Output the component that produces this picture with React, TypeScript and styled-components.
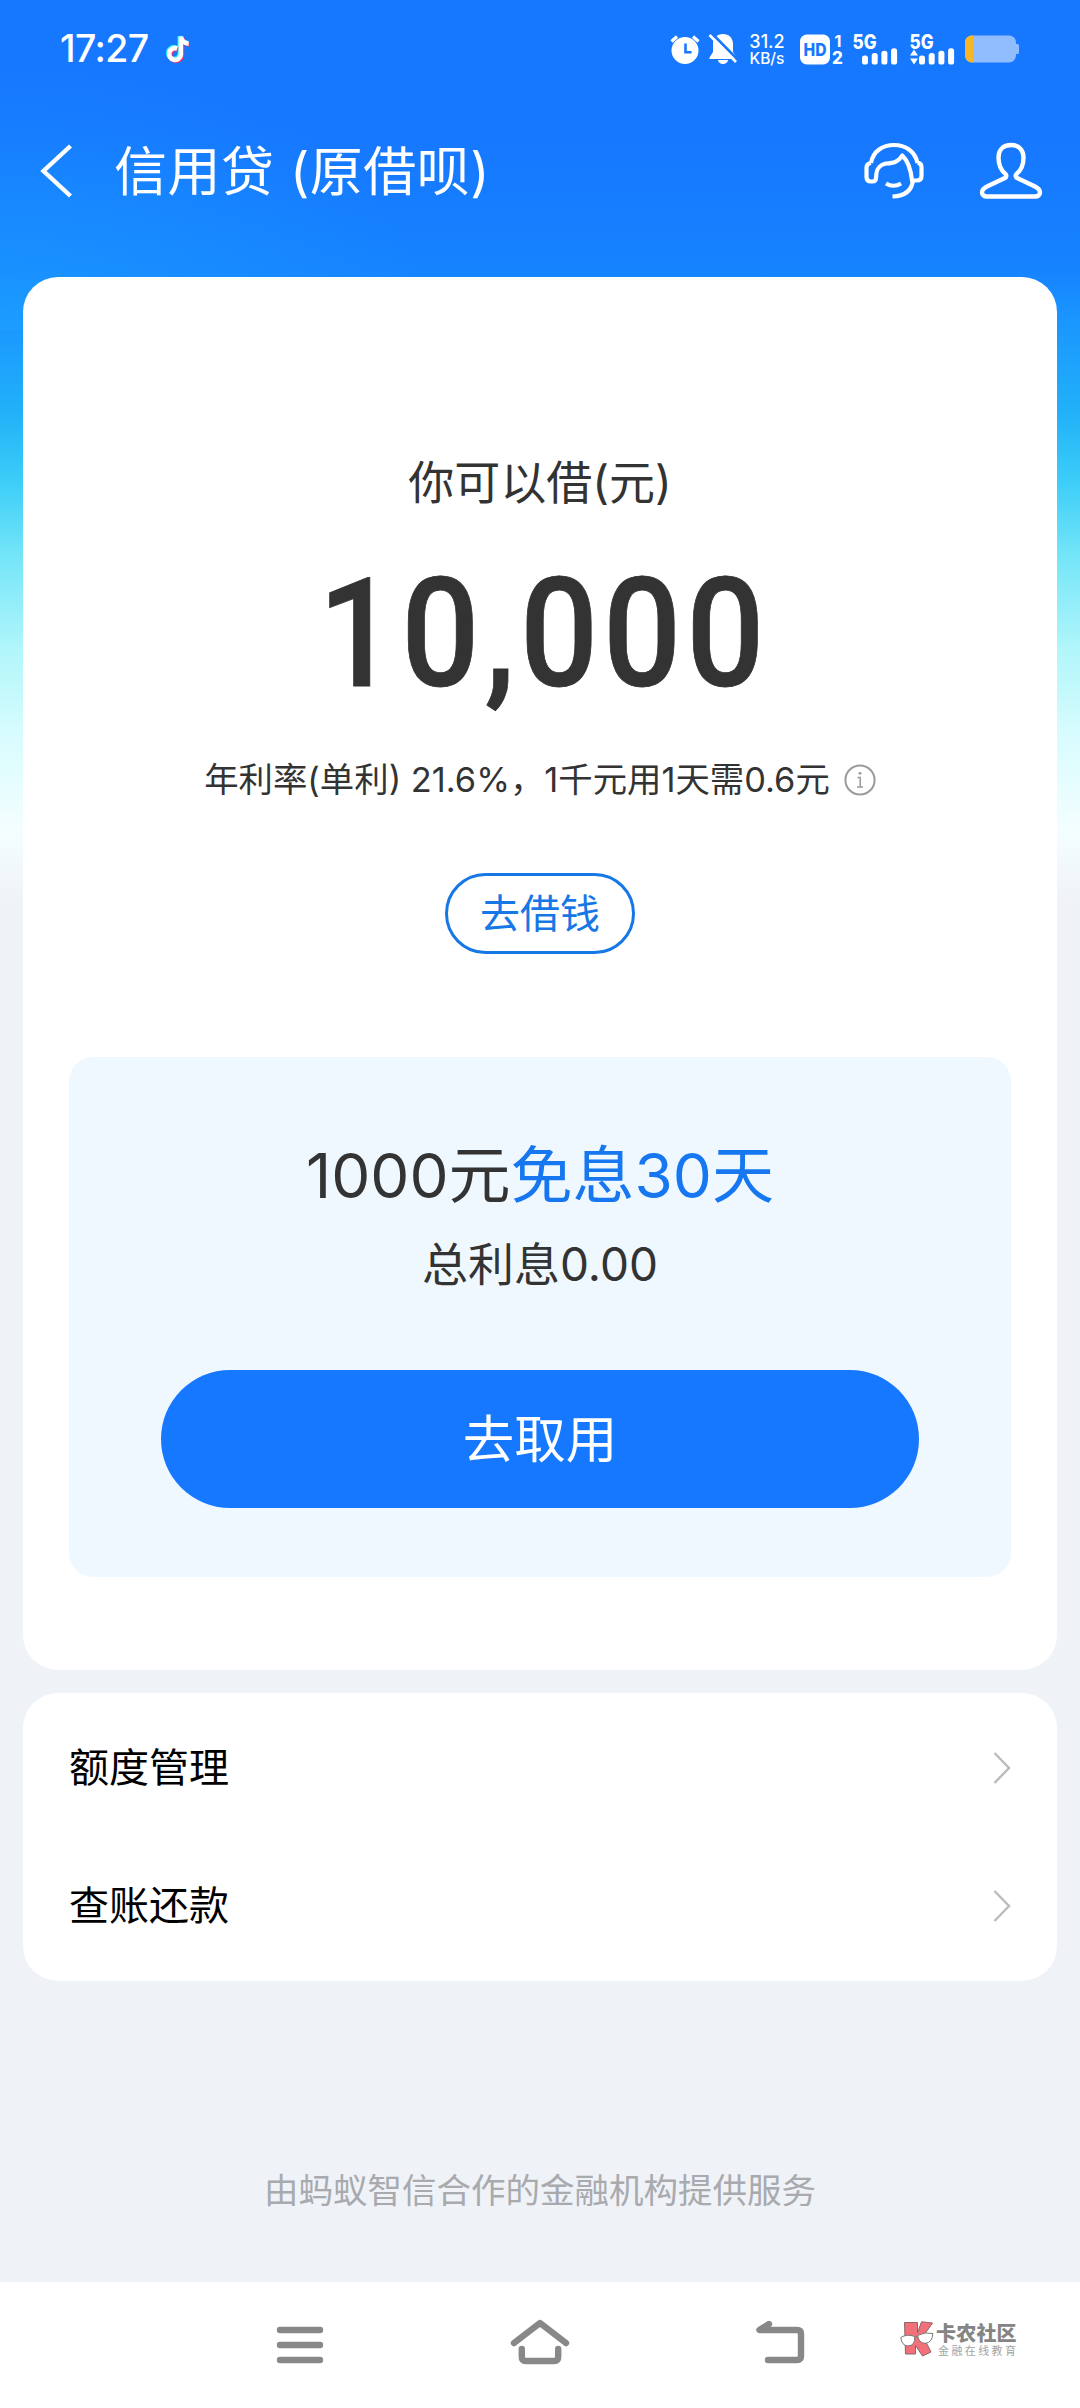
import React from 'react';
import styled, { createGlobalStyle } from 'styled-components';

const sans = `Inter, 'Noto Sans CJK SC', sans-serif`;

const GlobalStyle = createGlobalStyle`
  *, *::before, *::after { box-sizing: border-box; }
  body { margin: 0; background: #eff2f7; font-family: ${sans}; }
  button { font-family: inherit; padding: 0; border: 0; background: none; color: inherit; }
  h1, p { margin: 0; font-weight: 400; }
  svg { display: block; flex: none; overflow: visible; }
`;

const Page = styled.div`
  display: flex;
  flex-direction: column;
  width: 1080px;
  height: 2408px;
  background:
    radial-gradient(ellipse 420px 240px at 0 300px, rgba(28, 160, 255, 0.55), rgba(28, 160, 255, 0) 100%) no-repeat 0 0 / 1080px 330px,
    linear-gradient(180deg,
      #1677ff 0, #1677ff 130px, #1683ff 270px, #1a96ff 320px, #22b2f8 415px, #3ccdf8 480px,
      #74e5f8 556px, #b0f6fa 648px, #d8fcfe 735px, #f4feff 832px, #eff2f7 905px, #eff2f7 100%);
`;

const StatusBar = styled.div`
  display: flex;
  align-items: center;
  height: 98px;
  padding: 0 60px;
  color: #fff;
`;

const Clock = styled.span`
  width: 106px;
  font-size: 37.5px;
  line-height: 40px;
  font-weight: 500;
  letter-spacing: -0.6px;
`;

const StatusIcons = styled.div`
  display: flex;
  align-items: center;
  margin-left: auto;
`;

const NetSpeed = styled.div`
  display: flex;
  flex-direction: column;
  align-items: center;
  width: 38px;
  margin: 0 14px 0 10px;
  padding-top: 2px;
  font-size: 18px;
  line-height: 17px;
  white-space: nowrap;
  font-weight: 500;
`;

const NetUnit = styled.span`
  font-size: 15.5px;
`;

const TitleBar = styled.header`
  display: flex;
  align-items: center;
  height: 146px;
  margin-bottom: 33px;
  padding: 0 38px 0 40px;
  color: #fff;
`;

const Title = styled.h1`
  margin: 2px auto 0 41px;
  font-size: 53px;
  line-height: 70px;
  letter-spacing: 0.5px;
  white-space: nowrap;
`;

const HeaderAction = styled.button`
  display: flex;
  margin-left: 56px;
`;

const LoanCard = styled.section`
  display: flex;
  flex-direction: column;
  align-items: center;
  height: 1393px;
  margin: 0 23px;
  padding: 175px 46px 0;
  border-radius: 35px;
  background: #fff;
  color: #333;
`;

const Label = styled.p`
  font-size: 46px;
  line-height: 60px;
`;

const Amount = styled.p`
  margin-top: 42px;
  padding-left: 9px;
  font-family: Roboto, sans-serif;
  font-size: 152px;
  line-height: 160px;
  font-weight: 500;
  letter-spacing: 5.4px;
  transform: scaleX(0.905);
  -webkit-text-stroke: 0.8px #333;
`;

const RateRow = styled.div`
  display: flex;
  align-items: center;
  gap: 14px;
  margin-top: 42px;
  font-size: 34.4px;
  line-height: 48px;
  white-space: nowrap;
`;

const BorrowButton = styled.button`
  width: 190px;
  height: 81px;
  margin-top: 69px;
  border: 3px solid #1677e6;
  border-radius: 41px;
  color: #1677e6;
  font-size: 40px;
  line-height: 76px;
`;

const Offer = styled.div`
  display: flex;
  flex-direction: column;
  align-items: center;
  width: 942px;
  height: 520px;
  margin-top: 103px;
  padding-top: 79px;
  border-radius: 24px;
  background: #f0f8ff;
`;

const OfferTitle = styled.p`
  font-size: 62px;
  line-height: 80px;
  white-space: nowrap;
`;

const Highlight = styled.span`
  color: #1677f0;
`;

const OfferNote = styled.p`
  margin-top: 18px;
  font-size: 46px;
  line-height: 60px;
`;

const PrimaryButton = styled.button`
  width: 758px;
  height: 138px;
  margin-top: 76px;
  border-radius: 69px;
  background: #1677ff;
  color: #fff;
  font-size: 51.5px;
  line-height: 138px;
`;

const Menu = styled.nav`
  margin: 23px 23px 0;
  padding: 6px 46px;
  border-radius: 35px;
  background: #fff;
`;

const MenuRow = styled.a`
  display: flex;
  align-items: center;
  justify-content: space-between;
  height: 138px;
  color: #000;
  font-size: 40px;
  line-height: 54px;
`;

const Provider = styled.p`
  margin-top: 185px;
  text-align: center;
  font-size: 34.5px;
  line-height: 50px;
  color: #a8aaae;
`;

const NavBar = styled.footer`
  display: flex;
  align-items: center;
  height: 126px;
  margin-top: auto;
  padding-left: 180px;
  background: #fff;
`;

const NavItem = styled.button<{ $lift?: number }>`
  display: flex;
  align-items: center;
  justify-content: center;
  width: 240px;
  height: 126px;
  padding-bottom: ${(p) => (p.$lift ?? 0) * 2}px;
`;

const Brand = styled.div`
  display: flex;
  align-items: center;
  gap: 2px;
  padding: 0 0 12px;
  color: #858585;
`;

const BrandText = styled.div`
  display: flex;
  flex-direction: column;
  padding-top: 2px;
`;

const BrandName = styled.span`
  font-size: 20px;
  line-height: 20px;
  font-weight: 900;
  letter-spacing: 0.2px;
  white-space: nowrap;
`;

const BrandTag = styled.span`
  margin-top: 1px;
  padding-left: 2px;
  font-size: 11px;
  line-height: 12px;
  letter-spacing: 2.4px;
  color: #a3a3a3;
  white-space: nowrap;
`;

const Spacer = styled.span<{ $w: number }>`
  flex: none;
  width: ${(p) => p.$w}px;
`;

const TikTok = () => (
  <svg width="25" height="28" viewBox="0 0 25 28" fill="none" strokeWidth="4.6">
    <path stroke="#25f4ee" d="M10.2 12.5A5.9 5.9 0 1 0 13.9 19V1c.6 4 3.6 6.5 7.5 7" />
    <path stroke="#fe2c55" d="M12.2 14.3A5.9 5.9 0 1 0 15.9 20.5V2.5c.6 4 3.6 6.5 7.8 7" />
    <path stroke="#fff" d="M11.2 13.5A5.9 5.9 0 1 0 14.9 19.700V1.700c.6 4 3.600 6.500 7.800 7" />
  </svg>
);

const Alarm = () => (
  <svg width="30" height="30" viewBox="0 0 30 30">
    <circle cx="15" cy="16.5" r="13.5" fill="#fff" />
    <path d="M1.5 7.5 7 2.5M28.5 7.5 23 2.5" stroke="#fff" strokeWidth="3.2" />
    <path d="M15.5 9.5v8.7h6" stroke="#1677ff" strokeWidth="2.6" fill="none" />
  </svg>
);

const BellOff = () => (
  <svg width="30" height="32" viewBox="0 0 30 32">
    <path d="M15 1C9 1 5 5 5 11v8l-3.5 5.5V26h27v-1.5L25 19v-8C25 5 21 1 15 1zM10 27h10a5 4 0 0 1-10 0z" fill="#fff" />
    <path d="M3.5 0 31 28" stroke="#1677ff" strokeWidth="2.6" />
    <path d="M1.5 2 28 29" stroke="#fff" strokeWidth="2.6" />
  </svg>
);

const HdBadge = () => (
  <svg width="44" height="47" viewBox="0 -8 44 47" fontFamily="Inter, sans-serif">
    <rect x="0" y="0.5" width="30" height="30" rx="7" fill="#fff" />
    <text x="15" y="22" textAnchor="middle" fontSize="17.5" fontWeight="800" textLength="23" lengthAdjust="spacingAndGlyphs" fill="#1677ff">HD</text>
    <text x="38" y="12.5" textAnchor="middle" fontSize="16" fontWeight="700" fill="#fff">1</text>
    <text x="37.5" y="30" textAnchor="middle" fontSize="17" fontWeight="800" fill="#fff">2</text>
  </svg>
);

const Signal = ({ data }: { data?: boolean }) => (
  <svg width="46" height="47" viewBox="-1 -8 46 47" fill="#fff" fontFamily="Inter, sans-serif">
    <text x="-0.5" y="15" fontSize="19.5" fontWeight="800" textLength="24" lengthAdjust="spacingAndGlyphs">5G</text>
    {[0, 1, 2, 3].map((i) => (
      <rect key={i} x={9 + i * 9.7} y={21.5 - i * 2.4} width="6" height={9 + i * 2.4} rx="2.6" />
    ))}
    {data && <path d="M0 21.5 4 15.5 8 21.5zM0 24.5h8L4 30.5z" />}
  </svg>
);

const Battery = () => (
  <svg width="55" height="28" viewBox="0 0 55 28">
    <defs>
      <clipPath id="cell"><rect x="0" y="0.5" width="51" height="27" rx="7" /></clipPath>
    </defs>
    <g clipPath="url(#cell)">
      <rect width="51" height="28" fill="#91bdff" />
      <rect width="8" height="28" fill="#f7b626" />
    </g>
    <path d="M51 9h1.5a1.5 1.5 0 0 1 1.5 1.5v7a1.5 1.5 0 0 1-1.5 1.5H51z" fill="#91bdff" />
  </svg>
);

const Back = () => (
  <svg width="33" height="54" viewBox="0 0 33 54" fill="none" stroke="#fff" strokeWidth="4.4">
    <path d="M30.5 2 3.5 27l27 25" />
  </svg>
);

const Support = () => (
  <svg width="60" height="58" viewBox="0 0 60 58" fill="none" stroke="#fff" strokeWidth="4.2" strokeLinejoin="round">
    <path d="M7 21C9 9 19 3 30 3s21 6 23.5 18" />
    <path d="M7 21C4 21.5 2.5 23 2.5 25.5V35c0 3 1.8 4.5 4.5 4.5h1.5c2.5 0 3.6-1.5 3.6-4C12.1 27 15 23 22 21.5c7-.5 12-1 16.3-8C43 18 46.5 24 48 38.5h5c2.7 0 4.5-1.5 4.5-4.5v-9c0-2.5-1.5-4-4-4.2" />
    <path d="M22 41.5c4.5 2.7 10.5 2.7 15 0M49 38c-1 10-8 16-20.5 16.5" />
  </svg>
);

const User = () => (
  <svg width="62" height="58" viewBox="0 0 62 58" fill="none" stroke="#fff" strokeWidth="4.4" strokeLinejoin="round">
    <path d="M31 3c-8 0-12.5 5-12.5 12.5 0 7.5 2 12.5 7 16.5 1.3 1.3 1 3.2-.6 4L7 44.5c-3.5 1.7-5 3.5-5 6S4 54.5 7 54.5h48c3 0 5-1.5 5-4s-1.5-4.3-5-6L37.1 36c-1.6-.8-1.9-2.7-.6-4 5-4 7-9 7-16.5C43.5 8 39 3 31 3z" />
  </svg>
);

const Info = () => (
  <svg width="32" height="32" viewBox="0 0 32 32" fill="none" stroke="#999" strokeWidth="2">
    <circle cx="16" cy="16" r="14.6" />
    <path d="M13.5 13.5h2.7V23M13 23h6" strokeWidth="1.5" />
    <circle cx="16" cy="9.3" r="1.4" fill="#999" stroke="none" />
  </svg>
);

const Chevron = () => (
  <svg width="18" height="32" viewBox="0 0 18 32" fill="none" stroke="#bbb" strokeWidth="2.4">
    <path d="M1.5 1 16 16 1.5 31" />
  </svg>
);

const navStroke = { fill: 'none', stroke: '#888', strokeWidth: 6.4, strokeLinecap: 'round', strokeLinejoin: 'round' } as const;

const Recents = () => (
  <svg width="46" height="38" viewBox="0 0 46 38" {...navStroke}>
    <path d="M3 4h40M3 19h40M3 34h40" />
  </svg>
);

const Home = () => (
  <svg width="58" height="50" viewBox="0 0 58 50" {...navStroke}>
    <path d="M3 26 29 6 55 26M10.8 32v8q0 4 4 4h28.4q4 0 4-4v-8" />
  </svg>
);

const Return = () => (
  <svg width="50" height="50" viewBox="0 0 50 50" {...navStroke}>
    <path d="M14 8 4.5 14H42q4 0 4 4v22q0 4-4 4H13" />
  </svg>
);

const BrandMark = () => (
  <svg width="34" height="36" viewBox="0 0 34 36">
    <g fill="#f2707a" stroke="#8d6468" strokeWidth="1">
      <path d="M4.5 1.5H17.5V12L21.5 0.8 32.5 2 23 15.5 31 31 22.5 35 15.5 24.5V33H5.5z" />
    </g>
    <g fill="#fff" stroke="#777" strokeWidth="1">
      <path d="M0.8 16.5Q7 12.5 14.8 15.5 15.5 24.5 8 25 1.5 24.5 0.8 16.5z" />
      <path d="M17.5 14.5Q25 10.5 32.8 12.5 32.5 21.5 25.5 22.3 19 22.5 17.5 14.5z" />
      <path d="M14.8 16.5 17.5 15.5" fill="none" />
    </g>
  </svg>
);

export default function App() {
  return (
    <>
      <GlobalStyle />
      <Page>
        <StatusBar>
          <Clock>17:27</Clock>
          <TikTok />
          <StatusIcons>
            <Alarm />
            <Spacer $w={8} />
            <BellOff />
            <NetSpeed>
              31.2
              <NetUnit>KB/s</NetUnit>
            </NetSpeed>
            <HdBadge />
            <Spacer $w={8} />
            <Signal />
            <Spacer $w={11} />
            <Signal data />
            <Spacer $w={10} />
            <Battery />
          </StatusIcons>
        </StatusBar>

        <TitleBar>
          <Back />
          <Title>信用贷 (原借呗)</Title>
          <HeaderAction aria-label="客服"><Support /></HeaderAction>
          <HeaderAction aria-label="我的"><User /></HeaderAction>
        </TitleBar>

        <LoanCard>
          <Label>你可以借(元)</Label>
          <Amount>10,000</Amount>
          <RateRow>
            年利率(单利) 21.6%，1千元用1天需0.6元
            <Info />
          </RateRow>
          <BorrowButton>去借钱</BorrowButton>
          <Offer>
            <OfferTitle>1000元<Highlight>免息30天</Highlight></OfferTitle>
            <OfferNote>总利息0.00</OfferNote>
            <PrimaryButton>去取用</PrimaryButton>
          </Offer>
        </LoanCard>

        <Menu>
          <MenuRow>额度管理<Chevron /></MenuRow>
          <MenuRow>查账还款<Chevron /></MenuRow>
        </Menu>

        <Provider>由蚂蚁智信合作的金融机构提供服务</Provider>

        <NavBar>
          <NavItem aria-label="最近任务"><Recents /></NavItem>
          <NavItem aria-label="主页" $lift={3.5}><Home /></NavItem>
          <NavItem aria-label="返回" $lift={4}><Return /></NavItem>
          <Brand>
            <BrandMark />
            <BrandText>
              <BrandName>卡农社区</BrandName>
              <BrandTag>金融在线教育</BrandTag>
            </BrandText>
          </Brand>
        </NavBar>
      </Page>
    </>
  );
}
